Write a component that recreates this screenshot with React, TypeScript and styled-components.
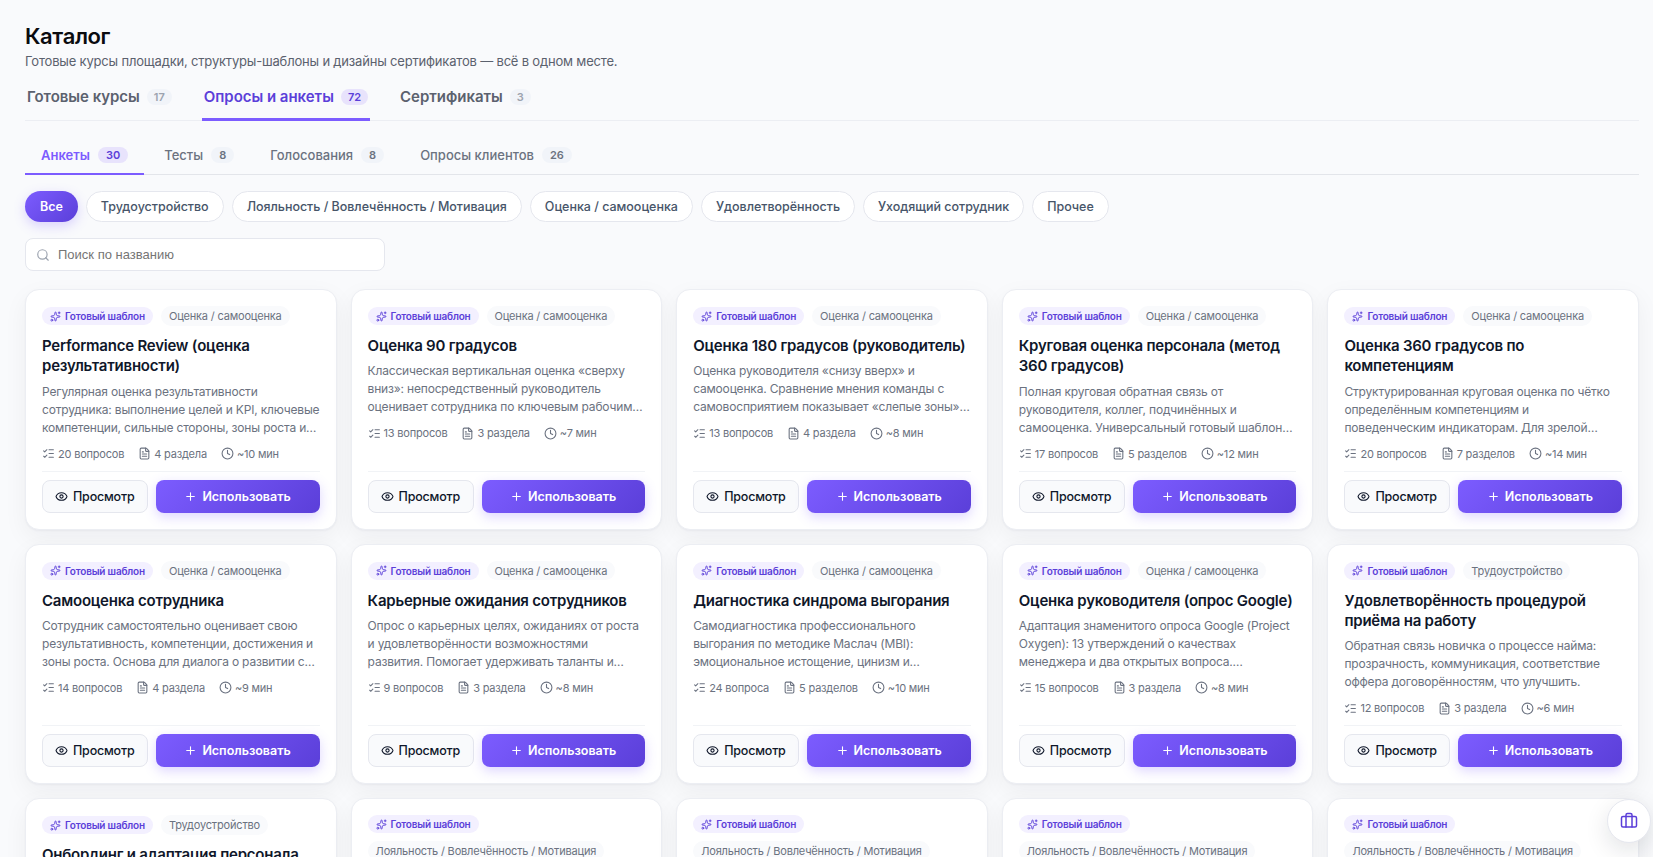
import React from 'react';
import styled, { createGlobalStyle, css } from 'styled-components';
import { Briefcase, Clock, Eye, FileText, ListChecks, Plus, Search, Sparkles } from 'lucide-react';

const GlobalStyle = createGlobalStyle`
  *, *::before, *::after { box-sizing: border-box; }
  html, body { margin: 0; height: 100%; }
  body {
    overflow: hidden;
    background: #f9fafc;
    color: #0f172a;
    font-family: Inter, "Liberation Sans", sans-serif;
    font-size: 13px;
  }
  button { font-family: inherit; }
`;

const Page = styled.main`
  height: 857px;
  overflow: hidden;
  padding: 23px 14px 0 25px;
`;

const Title = styled.h1`
  margin: 0;
  font-size: 22px;
  line-height: 27px;
  font-weight: 600;
  letter-spacing: -0.38px;
  color: #0b0b0f;
`;

const Subtitle = styled.p`
  margin: 1px 0 0;
  font-size: 13px;
  line-height: 20px;
  letter-spacing: -0.186px;
  color: #5b616e;
`;

const MainTabs = styled.nav`
  display: flex;
  gap: 28px;
  height: 49px;
  margin-top: 1px;
  border-bottom: 1px solid #eceef3;
`;

const Count = styled.span<{ $active?: boolean; $sub?: boolean }>`
  display: inline-flex;
  align-items: center;
  height: 16px;
  padding: 0 ${p => (p.$sub ? 8 : 7)}px;
  border-radius: 999px;
  font-size: 11px;
  font-weight: 600;
  letter-spacing: 0;
  color: ${p => (p.$active ? '#5b3fd9' : p.$sub ? '#6b7280' : '#9ca3af')};
  background: ${p => (p.$active ? '#e8e3fc' : '#f1f4f9')};
`;

const MainTab = styled.button<{ $active?: boolean }>`
  display: flex;
  align-items: center;
  gap: 7px;
  height: 49px;
  padding: 3px 2px 0;
  border: 0;
  border-bottom: 3px solid ${p => (p.$active ? '#7c5cff' : 'transparent')};
  background: none;
  font-size: 15px;
  font-weight: 600;
  letter-spacing: -0.03px;
  color: ${p => (p.$active ? '#5b3fd9' : '#5b616e')};
`;

const SubTabs = styled.nav`
  display: flex;
  gap: 4px;
  height: 38px;
  margin-top: 16px;
  border-bottom: 1px solid #e3e5ea;
`;

const SubTab = styled.button<{ $active?: boolean }>`
  display: flex;
  align-items: center;
  gap: 8px;
  height: 38px;
  padding: 0 16px;
  border: 0;
  border-bottom: 2px solid ${p => (p.$active ? '#7c5cff' : 'transparent')};
  background: none;
  font-size: 13px;
  font-weight: ${p => (p.$active ? 600 : 500)};
  color: ${p => (p.$active ? '#7c5cff' : '#6b7280')};
`;

const Chips = styled.div`
  display: flex;
  gap: 8px;
  margin-top: 16px;
`;

const Chip = styled.button<{ $active?: boolean }>`
  height: 31px;
  padding: 0 14px;
  border: 1px solid #e5e7ee;
  border-radius: 999px;
  background: #fff;
  color: #475569;
  font-size: 12.5px;
  font-weight: 500;
  letter-spacing: -0.02px;
  ${p =>
    p.$active &&
    css`
      padding: 0 15px;
      border: 0;
      background: linear-gradient(135deg, #7c5cff, #5b3fd9);
      color: #fff;
      font-weight: 600;
      box-shadow: 0 4px 12px rgba(124, 92, 255, 0.25);
    `}
`;

const SearchBox = styled.label`
  display: flex;
  align-items: center;
  gap: 8px;
  width: 360px;
  height: 33px;
  margin-top: 16px;
  padding: 0 10px;
  border: 1px solid #e5e7ee;
  border-radius: 8px;
  background: #fff;
  color: #9ca3af;
`;

const SearchInput = styled.input`
  flex: 1;
  border: 0;
  padding: 0;
  outline: 0;
  background: none;
  font-family: "Liberation Sans", Arial, sans-serif;
  font-size: 13px;
  color: #0f172a;
  &::placeholder { color: #757575; opacity: 1; }
`;

const Grid = styled.section`
  display: grid;
  grid-template-columns: repeat(5, minmax(0, 1fr));
  grid-auto-rows: 240.5px;
  gap: 14px;
  margin-top: 18.4px;
`;

const CardBox = styled.article`
  display: flex;
  flex-direction: column;
  padding: 16px;
  border: 1px solid #eceef3;
  border-radius: 14px;
  background: #fff;
  box-shadow: 0 1px 2px rgba(15, 23, 42, 0.04), 0 8px 24px rgba(15, 23, 42, 0.05);
`;

const Tags = styled.div`
  display: flex;
  flex-wrap: wrap;
  align-items: center;
  gap: 8px;
`;

const TemplateTag = styled.span`
  display: inline-flex;
  align-items: center;
  gap: 4px;
  height: 18px;
  padding: 0 8px;
  border-radius: 999px;
  background: #f3f0ff;
  color: #5b3fd9;
  font-size: 10px;
  font-weight: 600;
  letter-spacing: -0.19px;
  white-space: nowrap;
`;

const CategoryTag = styled.span`
  display: inline-flex;
  align-items: center;
  height: 19.5px;
  padding: 0 8px;
  border-radius: 999px;
  background: #f9fafc;
  color: #6b7280;
  font-size: 11px;
  letter-spacing: -0.18px;
  white-space: nowrap;
`;

const CardTitle = styled.h3`
  margin: 10.2px 0 0;
  font-size: 15px;
  line-height: 20.25px;
  font-weight: 600;
  letter-spacing: -0.22px;
  color: #0f172a;
`;

const Description = styled.p`
  flex: none;
  margin: 6px 0 0;
  font-size: 12px;
  line-height: 18px;
  letter-spacing: -0.18px;
  white-space: pre;
  color: #6b7280;
`;

const Meta = styled.div`
  display: flex;
  gap: 14px;
  margin-top: 9px;
  font-size: 11px;
  line-height: 16px;
  letter-spacing: -0.2px;
  color: #6b7280;
`;

const MetaItem = styled.span`
  display: inline-flex;
  align-items: center;
  gap: 3px;
  white-space: nowrap;
`;

const Actions = styled.footer`
  display: flex;
  gap: 8px;
  margin-top: auto;
  padding-top: 8px;
  border-top: 1px solid #f1f3f6;
`;

const ActionButton = styled.button<{ $primary?: boolean }>`
  display: inline-flex;
  align-items: center;
  justify-content: center;
  gap: 5px;
  height: 33px;
  padding: 0 12.5px 0 12px;
  border: 1px solid #e5e7ee;
  border-radius: 8px;
  background: #f9fafc;
  color: #0f172a;
  font-size: 12.5px;
  font-weight: 500;
  letter-spacing: -0.2px;
  white-space: nowrap;
  ${p =>
    p.$primary &&
    css`
      flex: 1;
      border: 0;
      background: linear-gradient(135deg, #7c5cff, #5b3fd9);
      color: #fff;
      font-weight: 600;
      letter-spacing: -0.02px;
      box-shadow: 0 4px 12px rgba(124, 92, 255, 0.25);
    `}
`;

const FloatingButton = styled.button`
  position: fixed;
  right: 2px;
  bottom: 14px;
  display: flex;
  align-items: center;
  justify-content: center;
  width: 44px;
  height: 44px;
  padding: 0;
  border: 1px solid #e5e7ee;
  border-radius: 50%;
  background: #fff;
  color: #5b3fd9;
  box-shadow: 0 8px 24px rgba(15, 23, 42, 0.12);
`;

const mainTabs = [
  { label: 'Готовые курсы', count: 17 },
  { label: 'Опросы и анкеты', count: 72, active: true },
  { label: 'Сертификаты', count: 3 },
];

const subTabs = [
  { label: 'Анкеты', count: 30, active: true },
  { label: 'Тесты', count: 8 },
  { label: 'Голосования', count: 8 },
  { label: 'Опросы клиентов', count: 26 },
];

const chips = [
  'Все',
  'Трудоустройство',
  'Лояльность / Вовлечённость / Мотивация',
  'Оценка / самооценка',
  'Удовлетворённость',
  'Уходящий сотрудник',
  'Прочее',
];

interface Template {
  category: string;
  title?: string;
  text?: string;
  questions?: string;
  sections?: string;
  time?: string;
}

const SELF = 'Оценка / самооценка';
const HIRE = 'Трудоустройство';
const LOYAL = 'Лояльность / Вовлечённость / Мотивация';

const make = (
  category: string,
  title?: string,
  text?: string,
  questions?: string,
  sections?: string,
  time?: string,
): Template => ({ category, title, text, questions, sections, time });

const templates: Template[] = [
  make(SELF, 'Performance Review (оценка результативности)', 'Регулярная оценка результативности\nсотрудника: выполнение целей и KPI, ключевые\nкомпетенции, сильные стороны, зоны роста и…', '20 вопросов', '4 раздела', '~10 мин'),
  make(SELF, 'Оценка 90 градусов', 'Классическая вертикальная оценка «сверху\nвниз»: непосредственный руководитель\nоценивает сотрудника по ключевым рабочим…', '13 вопросов', '3 раздела', '~7 мин'),
  make(SELF, 'Оценка 180 градусов (руководитель)', 'Оценка руководителя «снизу вверх» и\nсамооценка. Сравнение мнения команды с\nсамовосприятием показывает «слепые зоны»…', '13 вопросов', '4 раздела', '~8 мин'),
  make(SELF, 'Круговая оценка персонала (метод 360 градусов)', 'Полная круговая обратная связь от\nруководителя, коллег, подчинённых и\nсамооценка. Универсальный готовый шаблон…', '17 вопросов', '5 разделов', '~12 мин'),
  make(SELF, 'Оценка 360 градусов по компетенциям', 'Структурированная круговая оценка по чётко\nопределённым компетенциям и\nповеденческим индикаторам. Для зрелой…', '20 вопросов', '7 разделов', '~14 мин'),
  make(SELF, 'Самооценка сотрудника', 'Сотрудник самостоятельно оценивает свою\nрезультативность, компетенции, достижения и\nзоны роста. Основа для диалога о развитии с…', '14 вопросов', '4 раздела', '~9 мин'),
  make(SELF, 'Карьерные ожидания сотрудников', 'Опрос о карьерных целях, ожиданиях от роста\nи удовлетворённости возможностями\nразвития. Помогает удерживать таланты и…', '9 вопросов', '3 раздела', '~8 мин'),
  make(SELF, 'Диагностика синдрома выгорания', 'Самодиагностика профессионального\nвыгорания по методике Маслач (MBI):\nэмоциональное истощение, цинизм и…', '24 вопроса', '5 разделов', '~10 мин'),
  make(SELF, 'Оценка руководителя (опрос Google)', 'Адаптация знаменитого опроса Google (Project\nOxygen): 13 утверждений о качествах\nменеджера и два открытых вопроса.…', '15 вопросов', '3 раздела', '~8 мин'),
  make(HIRE, 'Удовлетворённость процедурой приёма на работу', 'Обратная связь новичка о процессе найма:\nпрозрачность, коммуникация, соответствие\nоффера договорённостям, что улучшить.', '12 вопросов', '3 раздела', '~6 мин'),
  make(HIRE, 'Онбординг и адаптация персонала'),
  make(LOYAL),
  make(LOYAL),
  make(LOYAL),
  make(LOYAL),
];

function Card({ item }: { item: Template }) {
  return (
    <CardBox>
      <Tags>
        <TemplateTag>
          <Sparkles size={11} />
          Готовый шаблон
        </TemplateTag>
        <CategoryTag>{item.category}</CategoryTag>
      </Tags>
      {item.title && <CardTitle>{item.title}</CardTitle>}
      {item.text && (
        <>
          <Description>{item.text}</Description>
          <Meta>
            <MetaItem><ListChecks size={13} />{item.questions}</MetaItem>
            <MetaItem><FileText size={13} />{item.sections}</MetaItem>
            <MetaItem><Clock size={13} />{item.time}</MetaItem>
          </Meta>
          <Actions>
            <ActionButton><Eye size={13} />Просмотр</ActionButton>
            <ActionButton $primary><Plus size={13} />Использовать</ActionButton>
          </Actions>
        </>
      )}
    </CardBox>
  );
}

export default function App() {
  return (
    <>
      <GlobalStyle />
      <Page>
        <Title>Каталог</Title>
        <Subtitle>Готовые курсы площадки, структуры-шаблоны и дизайны сертификатов — всё в одном месте.</Subtitle>
        <MainTabs>
          {mainTabs.map(t => (
            <MainTab key={t.label} $active={t.active}>
              {t.label}
              <Count $active={t.active}>{t.count}</Count>
            </MainTab>
          ))}
        </MainTabs>
        <SubTabs>
          {subTabs.map(t => (
            <SubTab key={t.label} $active={t.active}>
              {t.label}
              <Count $sub $active={t.active}>{t.count}</Count>
            </SubTab>
          ))}
        </SubTabs>
        <Chips>
          {chips.map((c, i) => (
            <Chip key={c} $active={i === 0}>{c}</Chip>
          ))}
        </Chips>
        <SearchBox>
          <Search size={14} />
          <SearchInput placeholder="Поиск по названию" />
        </SearchBox>
        <Grid>
          {templates.map((t, i) => (
            <Card key={i} item={t} />
          ))}
        </Grid>
      </Page>
      <FloatingButton aria-label="Портфель">
        <Briefcase size={18} />
      </FloatingButton>
    </>
  );
}
